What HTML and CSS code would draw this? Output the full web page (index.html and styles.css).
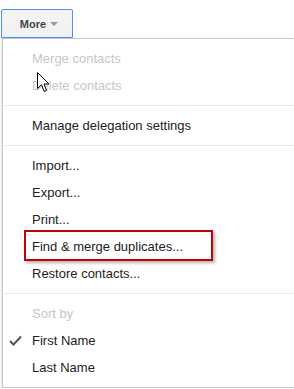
FILE: index.html
```html
<!DOCTYPE html>
<html lang="en">
<head>
  <meta charset="UTF-8"><meta name="viewport" content="width=device-width,initial-scale=1">
  <title>More menu</title>
  <link rel="stylesheet" href="styles.css">
</head>
<body>
  <div class="wrap">
    <button class="more-btn">More <span class="caret"></span></button>
    <ul class="menu">
      <li class="item disabled">Merge contacts</li>
      <li class="item disabled">Delete contacts</li>
      <li class="sep"></li>
      <li class="item">Manage delegation settings</li>
      <li class="sep"></li>
      <li class="item">Import...</li>
      <li class="item">Export...</li>
      <li class="item">Print...</li>
      <li class="item highlight"><span class="mark-box"></span>Find &amp; merge duplicates...</li>
      <li class="item">Restore contacts...</li>
      <li class="sep"></li>
      <li class="item label">Sort by</li>
      <li class="item checked">
        <svg class="check" width="13" height="11" viewBox="0 0 13 11"><path d="M1 6 L4.5 9.5 L12 1.5" fill="none" stroke="#555" stroke-width="2"/></svg>
        First Name
      </li>
      <li class="item">Last Name</li>
    </ul>
    <svg class="cursor" width="13" height="21" viewBox="0 0 13 21">
      <path d="M0.5 0.5 L0.5 16.5 L4.5 12.8 L7.2 19.5 L9.6 18.5 L7 12 L12 12 Z" fill="#fff" stroke="#000" stroke-width="1" stroke-linejoin="round"/>
    </svg>
  </div>
</body>
</html>
```

FILE: styles.css
```css
* { box-sizing: border-box; }
body {
  margin: 0;
  background: #fff;
  overflow: hidden;
  font-family: "Liberation Sans", Arial, sans-serif;
  font-size: 13px;
}
.wrap {
  position: relative;
  padding: 9px 0 0 1px;
}
.more-btn {
  display: flex; align-items: center; justify-content: center; gap: 4px;
  width: 72px; height: 29px;
  margin: 0; padding: 0 0 0 4px;
  border: 1px solid #4d90fe;
  border-radius: 2px 2px 0 0;
  background: linear-gradient(#f5f5f5, #f1f1f1);
  color: #444;
  font: bold 11px "Liberation Sans", Arial, sans-serif;
}
.caret {
  width: 0; height: 0;
  border-left: 4px solid transparent;
  border-right: 4px solid transparent;
  border-top: 4px solid #999;
  margin-top: 1px;
}
.menu {
  list-style: none;
  margin: 0 0 0 1px;
  padding: 6px 0 6px;
  border: 1px solid #c6c6c6;
  border-right: 0;
  background: #fff;
  box-shadow: 0 2px 4px rgba(0,0,0,0.15);
}
.item {
  position: relative;
  padding: 6px 0 6px 29px;
  line-height: 15px;
  color: #222;
}
.item.disabled, .item.label { color: #c6c6c6; }
.sep {
  height: 1px;
  margin: 6px 0;
  background: #ebebeb;
}
.check {
  position: absolute; left: 6px; top: 8px;
}
.highlight .mark-box {
  position: absolute;
  left: 21px; top: -3px;
  width: 189px; height: 31px;
  border: 2px solid #c4000b;
  box-shadow: 2px 2px 3px rgba(0,0,0,0.3);
}
.cursor {
  position: absolute;
  left: 37px; top: 72px;
}
```
